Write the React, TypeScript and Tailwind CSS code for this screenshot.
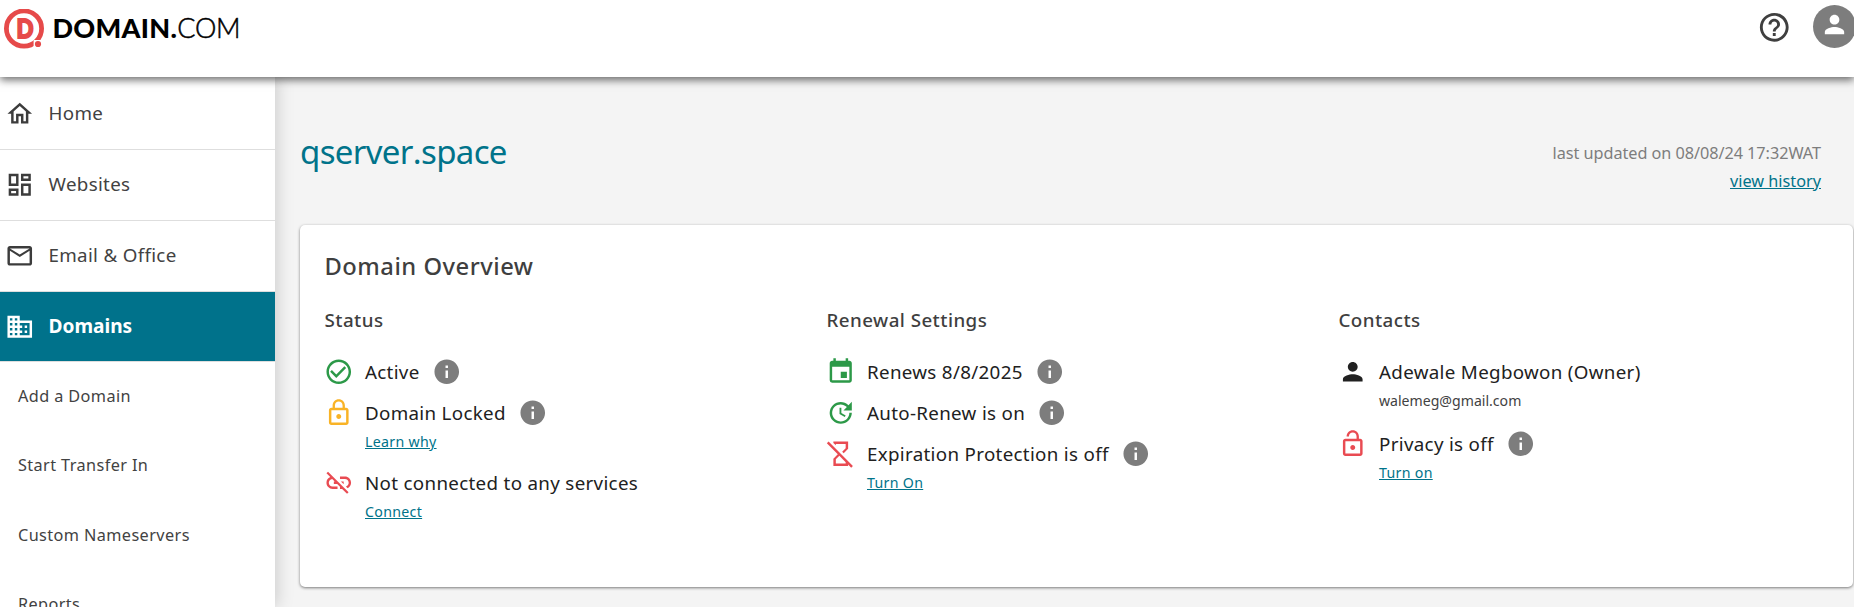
import type { ReactNode } from "react";
import type { IconType } from "react-icons";
import {
  MdCheckCircleOutline,
  MdDomain,
  MdEvent,
  MdHelpOutline,
  MdHourglassDisabled,
  MdInfo,
  MdLinkOff,
  MdLockOpen,
  MdLockOutline,
  MdOutlineDashboard,
  MdOutlineEmail,
  MdOutlineHome,
  MdPerson,
  MdUpdate,
} from "react-icons/md";

const navItems: { label: string; icon: IconType; active?: boolean }[] = [
  { label: "Home", icon: MdOutlineHome },
  { label: "Websites", icon: MdOutlineDashboard },
  { label: "Email & Office", icon: MdOutlineEmail },
  { label: "Domains", icon: MdDomain, active: true },
];

const subItems = ["Add a Domain", "Start Transfer In", "Custom Nameservers", "Reports"];

function Logo() {
  return (
    <div className="flex items-center pl-1">
      <svg width="41" height="42" viewBox="0 0 41 42" className="mt-1">
        <circle cx="20" cy="19.5" r="17.6" fill="none" stroke="#e64a4a" strokeWidth="4.8" />
        <text
          x="21"
          y="28.7"
          textAnchor="middle"
          fontFamily="Lato"
          fontWeight="900"
          fontSize="26"
          fill="#e64a4a"
          stroke="#e64a4a"
          strokeWidth="1.8"
          textLength="17"
          lengthAdjust="spacingAndGlyphs"
        >
          D
        </text>
        <path d="M29.6 31h12v11h-12z" fill="#fff" />
        <circle cx="34" cy="35" r="3.1" fill="#e64a4a" />
      </svg>
      <div className="pl-[7.5px] font-['Lato',sans-serif] text-[27px] leading-[56px] text-black">
        <span className="font-black tracking-[0.3px]">DOMAIN.</span>
        <span className="font-light tracking-[-0.2px] [-webkit-text-stroke:0.5px_black]">COM</span>
      </div>
    </div>
  );
}

function Row({
  icon: Icon,
  color,
  children,
  info = false,
}: {
  icon: IconType;
  color: string;
  children: ReactNode;
  info?: boolean;
}) {
  return (
    <div className="flex h-[41px] items-center whitespace-nowrap text-[18.75px] tracking-[0.32px] text-[#212121]">
      <Icon size={29.5} className={`mr-[11.5px] shrink-0 ${color}`} />
      <span className="pt-px">{children}</span>
      {info && <MdInfo size={29.5} className="ml-[12px] shrink-0 text-[#7d7d7d]" />}
    </div>
  );
}

function ActionLink({ children }: { children: ReactNode }) {
  return (
    <a className="ml-[41px] block h-[17px] w-fit text-[14.2px] leading-[17px] tracking-[0.3px] text-[#00738a] underline">
      {children}
    </a>
  );
}

function Column({ title, children }: { title: string; children: ReactNode }) {
  return (
    <section>
      <h3 className="mb-[18px] pl-[0.5px] text-[18.75px] leading-[26px] font-medium tracking-[0.45px] text-[#3f3f3f]">
        {title}
      </h3>
      {children}
    </section>
  );
}

export default function App() {
  return (
    <div className="flex h-[607px] flex-col overflow-hidden bg-[#f4f4f4] font-['Noto_Sans',sans-serif]">
      <header className="z-20 flex h-[77px] shrink-0 items-start justify-between bg-white shadow-[0_3px_8px_rgba(0,0,0,0.58)]">
        <Logo />
        <div className="flex items-center gap-[21px]">
          <MdHelpOutline size={34.5} className="mt-1.5 text-[#3f3f3f]" />
          <div className="-mr-[1.5px] mt-[5px] flex h-[43px] w-[43px] items-center justify-center rounded-full bg-[#7d7d7d] pb-[4px]">
            <MdPerson size={29} className="text-white" />
          </div>
        </div>
      </header>

      <div className="flex min-h-0 grow">
        <aside className="z-10 h-[530px] w-[275px] shrink-0 overflow-hidden bg-white pt-[2px] shadow-[2px_0_16px_rgba(0,0,0,0.17)]">
          {navItems.map(({ label, icon: Icon, active }) => (
            <div
              key={label}
              className={
                active
                  ? "flex h-[70px] items-center border-b border-[#dedede] bg-[#00728b] pl-[5px] text-[19.1px] font-bold text-white"
                  : "flex h-[71px] items-center border-b border-[#dedede] pl-[5px] text-[18.75px] tracking-[0.32px] text-[#424242]"
              }
            >
              <Icon size={29.5} className={active ? "text-white" : "text-[#3c3c3c]"} />
              <span className="pb-px pl-[14px]">{label}</span>
            </div>
          ))}
          {subItems.map((label) => (
            <div
              key={label}
              className="flex h-[69.4px] items-center pb-px pl-[18px] text-[16.25px] tracking-[0.4px] text-[#424242]"
            >
              {label}
            </div>
          ))}
        </aside>

        <main className="grow pl-[25px]">
          <div className="flex h-[148px] items-start justify-between pr-[33px]">
            <h1 className="pt-[51px] text-[33px] leading-[48px] font-normal tracking-[-0.65px] text-[#00738a] [font-kerning:none]">
              qserver.space
            </h1>
            <div className="pt-[62px] text-right text-[16.25px] leading-[28px] text-[#7d7d7d]">
              <p className="tracking-[-0.05px]">last updated on 08/08/24 17:32WAT</p>
              <a className="text-[#00738a] underline">view history</a>
            </div>
          </div>

          <div className="mr-px h-[362px] rounded-[5px] bg-white pt-[24px] pl-[24px] shadow-[0_1px_3px_rgba(0,0,0,0.5)]">
            <h2 className="mb-[24px] pl-[0.5px] text-[23.75px] leading-[34px] font-medium tracking-[0.5px] text-[#3f3f3f]">
              Domain Overview
            </h2>
            <div className="grid grid-cols-[502px_512px_1fr]">
              <Column title="Status">
                <Row icon={MdCheckCircleOutline} color="text-[#2c9948]" info>
                  Active
                </Row>
                <Row icon={MdLockOutline} color="text-[#f9b326]" info>
                  Domain Locked
                </Row>
                <ActionLink>Learn why</ActionLink>
                <div className="pt-3">
                  <Row icon={MdLinkOff} color="text-[#e94b52]">
                    Not connected to any services
                  </Row>
                </div>
                <ActionLink>Connect</ActionLink>
              </Column>
              <Column title="Renewal Settings">
                <Row icon={MdEvent} color="text-[#2c9948]" info>
                  Renews 8/8/2025
                </Row>
                <Row icon={MdUpdate} color="text-[#2c9948]" info>
                  Auto-Renew is on
                </Row>
                <Row icon={MdHourglassDisabled} color="text-[#e94b52]" info>
                  Expiration Protection is off
                </Row>
                <ActionLink>Turn On</ActionLink>
              </Column>
              <Column title="Contacts">
                <Row icon={MdPerson} color="text-[#212121]">
                  Adewale Megbowon (Owner)
                </Row>
                <p className="ml-[41px] h-[17px] text-[14.1px] leading-[17px] text-[#424242]">
                  walemeg@gmail.com
                </p>
                <div className="pt-[14px]">
                  <Row icon={MdLockOpen} color="text-[#e94b52]" info>
                    Privacy is off
                  </Row>
                </div>
                <ActionLink>Turn on</ActionLink>
              </Column>
            </div>
          </div>
        </main>
      </div>
    </div>
  );
}
